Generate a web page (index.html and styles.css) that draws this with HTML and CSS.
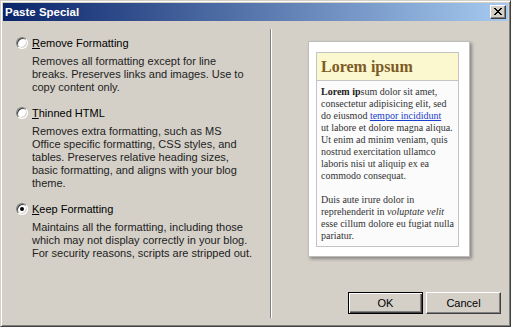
FILE: index.html
```html
<!DOCTYPE html>
<html>
<head>
<meta charset="utf-8">
<link rel="stylesheet" href="styles.css">
</head>
<body>
<div class="window">
  <div class="titlebar">
    <span class="title">Paste Special</span>
    <span class="close"><svg width="8" height="7" viewBox="0 0 8 7" shape-rendering="crispEdges"><path d="M0 0h2v1h-2zM6 0h2v1h-2zM1 1h2v1h-2zM5 1h2v1h-2zM2 2h4v1h-4zM3 3h2v1h-2zM2 4h4v1h-4zM1 5h2v1h-2zM5 5h2v1h-2zM0 6h2v1h-2zM6 6h2v1h-2z" fill="#000"/></svg></span>
  </div>
  <div class="content">
    <div class="options">
      <div class="option">
        <div class="opt-label"><span class="radio"></span><span><u>R</u>emove Formatting</span></div>
        <p class="desc">Removes all formatting except for line<br>breaks. Preserves links and images. Use to<br>copy content only.</p>
      </div>
      <div class="option">
        <div class="opt-label"><span class="radio"></span><span><u>T</u>hinned HTML</span></div>
        <p class="desc">Removes extra formatting, such as MS<br>Office specific formatting, CSS styles, and<br>tables. Preserves relative heading sizes,<br>basic formatting, and aligns with your blog<br>theme.</p>
      </div>
      <div class="option">
        <div class="opt-label"><span class="radio checked"></span><span><u>K</u>eep Formatting</span></div>
        <p class="desc">Maintains all the formatting, including those<br>which may not display correctly in your blog.<br>For security reasons, scripts are stripped out.</p>
      </div>
    </div>
    <div class="sep"></div>
    <div class="right">
      <div class="preview">
        <div class="pv-inner">
          <div class="pv-head">Lorem ipsum</div>
          <div class="pv-body">
            <p><b>Lorem ip</b>sum dolor sit amet,<br>consectetur adipisicing elit, sed<br>do eiusmod <a href="#">tempor incididunt</a><br>ut labore et dolore magna aliqua.<br>Ut enim ad minim veniam, quis<br>nostrud exercitation ullamco<br>laboris nisi ut aliquip ex ea<br>commodo consequat.</p>
            <p>Duis aute irure dolor in<br>reprehenderit in <i>voluptate velit</i><br>esse cillum dolore eu fugiat nulla<br>pariatur.</p>
          </div>
        </div>
      </div>
      <div class="buttons">
        <span class="btn default">OK</span>
        <span class="btn">Cancel</span>
      </div>
    </div>
  </div>
</div>
</body>
</html>
```
FILE: styles.css
```css
* { box-sizing: border-box; }
html, body { margin: 0; padding: 0; background: #d4d0c8; }
body { font-family: "Liberation Sans", Arial, sans-serif; font-size: 11px; color: #000; }

.window {
  width: 511px;
  height: 327px;
  border: 1px solid;
  border-color: #d4d0c8 #404040 #404040 #d4d0c8;
  box-shadow: inset 1px 1px #fff, inset -1px -1px #808080;
  padding: 2px;
  background: #d4d0c8;
  display: flex;
  flex-direction: column;
}

.titlebar {
  height: 18px;
  background: linear-gradient(to right, #0a246a, #a6caf0);
  display: flex;
  align-items: center;
  justify-content: space-between;
  padding: 0 2px 0 2px;
}
.title {
  color: #fff;
  font-weight: bold;
  font-size: 11.5px;
}
.close {
  width: 16px;
  height: 14px;
  background: #d4d0c8;
  border: 1px solid;
  border-color: #fff #404040 #404040 #fff;
  box-shadow: inset -1px -1px #808080;
  display: flex;
  align-items: center;
  justify-content: center;
  padding: 0 1px 1px 0;
}
.close svg { display: block; }

.content {
  flex: 1;
  display: flex;
}

.options {
  width: 267px;
  padding: 16px 0 0 13px;
}
.option + .option { margin-top: 13px; }
.opt-label {
  display: flex;
  align-items: center;
  height: 12px;
  line-height: 12px;
  gap: 4px;
}
.radio {
  width: 12px;
  height: 12px;
  border-radius: 50%;
  background: #fff;
  border: 1px solid;
  border-color: #808080 #fff #fff #808080;
  box-shadow: inset 1px 1px #404040, inset -1px -1px #d4d0c8;
  position: relative;
  flex: none;
}
.radio.checked::after {
  content: "";
  position: absolute;
  left: 3px;
  top: 3px;
  width: 4px;
  height: 4px;
  border-radius: 50%;
  background: #000;
}
.desc {
  margin: 6px 0 0 16px;
  line-height: 13px;
  color: #222;
  white-space: nowrap;
}

.sep {
  width: 2px;
  margin: 8px 0 6px;
  border-left: 1px solid #808080;
  border-right: 1px solid #fff;
}

.right {
  flex: 1;
  display: flex;
  flex-direction: column;
  justify-content: space-between;
  padding: 20px 7px 10px 36px;
}

.preview {
  width: 162px;
  height: 216px;
  background: #fff;
  border: 1px solid #bdbdbd;
  box-shadow: 2px 2px 3px rgba(0, 0, 0, 0.35);
  padding: 10px 10px 9px 7px;
}
.pv-inner {
  height: 100%;
  border: 1px solid #c4c4c4;
  background: #fbfbfb;
  font-family: "Liberation Serif", "Times New Roman", serif;
}
.pv-head {
  height: 28px;
  background: #fbf8d0;
  border-bottom: 1px solid #c4c4c4;
  color: #7b5b26;
  font-weight: bold;
  font-size: 16px;
  line-height: 27px;
  padding-left: 4px;
}
.pv-body {
  padding: 5px 0 0 4px;
  font-size: 10px;
  line-height: 12px;
  color: #333;
  white-space: nowrap;
}
.pv-body p { margin: 0; }
.pv-body p + p { margin-top: 12px; }
.pv-body a { color: #1a3fcc; text-decoration: underline; }
.pv-body b { color: #222; }

.buttons {
  display: flex;
  justify-content: flex-end;
  gap: 3px;
}
.btn {
  width: 75px;
  height: 22px;
  display: flex;
  align-items: center;
  justify-content: center;
  background: #d4d0c8;
  border: 1px solid;
  border-color: #fff #404040 #404040 #fff;
  box-shadow: inset -1px -1px #808080;
  font-size: 11px;
}
.btn.default {
  border: 1px solid #000;
  box-shadow: inset 1px 1px #fff, inset -1px -1px #404040, inset -2px -2px #808080;
}
```
